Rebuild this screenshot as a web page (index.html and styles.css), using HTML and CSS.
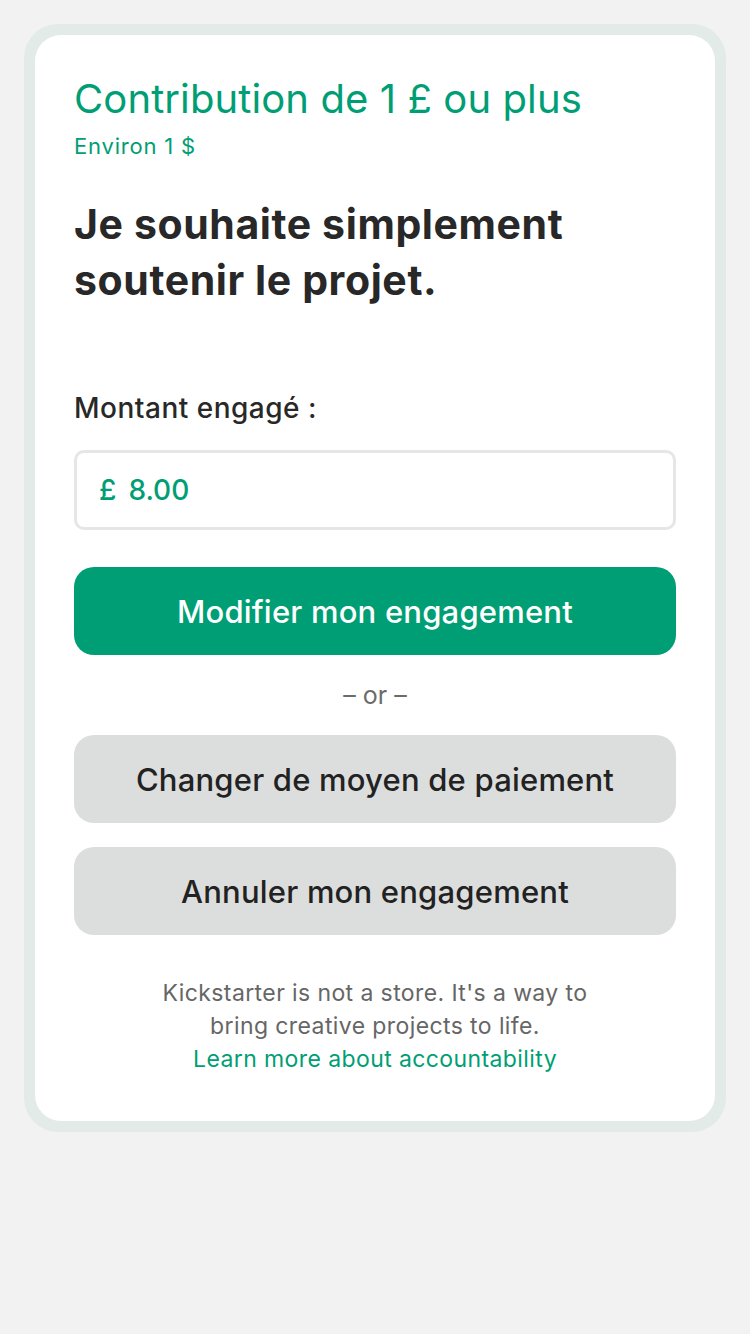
FILE: index.html
```html
<!DOCTYPE html>
<html lang="fr">
<head>
<meta charset="utf-8">
<link rel="stylesheet" href="styles.css">
</head>
<body>
<div class="page">
  <div class="card">
    <div class="card-inner">
      <h1 class="title">Contribution de 1 £ ou plus</h1>
      <div class="subtitle">Environ 1 $</div>
      <h2 class="desc">Je souhaite simplement soutenir le projet.</h2>
      <div class="label">Montant engagé :</div>
      <div class="input"><span class="cur">£</span><span class="amt">8.00</span></div>
      <button class="btn btn-primary">Modifier mon engagement</button>
      <div class="or">– or –</div>
      <button class="btn btn-grey">Changer de moyen de paiement</button>
      <button class="btn btn-grey btn-last">Annuler mon engagement</button>
      <p class="footer">Kickstarter is not a store. It's a way to<br>bring creative projects to life.<br><a class="link">Learn more about accountability</a></p>
    </div>
  </div>
</div>
</body>
</html>
```
FILE: styles.css
```css
* { box-sizing: border-box; }
html, body { margin: 0; padding: 0; }
body {
  background: #f2f2f2;
  font-family: Inter, "Noto Sans", sans-serif;
  width: 750px;
  height: 1334px;
}
.page { padding: 24px 24px; }
.card {
  background: #e3ebe9;
  border-radius: 34px;
  padding: 11px;
}
.card-inner {
  background: #fff;
  border-radius: 26px;
  padding: 40px 39px 45px 39px;
  display: flex;
  flex-direction: column;
}
.title {
  margin: 0;
  font-weight: 400;
  font-size: 40px;
  line-height: 48px;
  color: #009e74;
  letter-spacing: 0.1px;
}
.subtitle {
  margin-top: 10px;
  font-size: 22px;
  line-height: 26px;
  color: #009e74;
  letter-spacing: 0.8px;
}
.desc {
  margin: 37px 0 0 0;
  font-weight: 700;
  font-size: 41px;
  line-height: 56px;
  color: #282828;
  letter-spacing: 0.6px;
  max-width: 560px;
}
.label {
  margin-top: 83px;
  font-size: 28px;
  line-height: 34px;
  font-weight: 500;
  color: #282828;
  letter-spacing: 0.5px;
}
.input {
  margin-top: 25px;
  height: 80px;
  border: 3px solid #e6e6e6;
  border-radius: 10px;
  display: flex;
  align-items: center;
  padding-left: 22px;
  gap: 12px;
  font-size: 28px;
  font-weight: 500;
  color: #009e74;
}
.btn {
  display: block;
  width: 100%;
  height: 88px;
  border: 0;
  border-radius: 20px;
  font-family: Inter, "Noto Sans", sans-serif;
  font-size: 31px;
  font-weight: 500;
  letter-spacing: 0.2px;
  padding: 0;
}
.btn-primary {
  margin-top: 37px;
  background: #009e74;
  color: #fff;
}
.btn-grey {
  background: #dcdedd;
  color: #222;
  margin-top: 24px;
}
.or {
  margin-top: 25px;
  height: 55px;
  text-align: center;
  font-size: 25px;
  line-height: 30px;
  color: #6b6b6b;
}
.or + .btn-grey { margin-top: 0; }
.footer {
  margin: 42px 0 0 0;
  text-align: center;
  font-size: 23px;
  line-height: 33px;
  color: #666;
  letter-spacing: 0.4px;
}
.link { color: #009e74; }
```
